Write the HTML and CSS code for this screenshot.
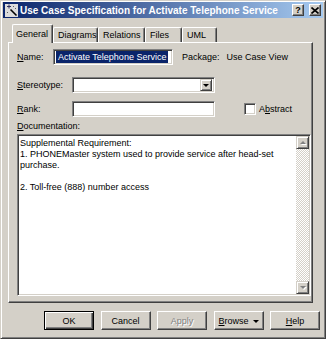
FILE: index.html
```html
<!DOCTYPE html>
<html>
<head>
<meta charset="utf-8">
<title>Use Case Specification</title>
<link rel="stylesheet" href="styles.css">
</head>
<body>

<div class="window">

<!-- barre de titre -->
<div class="titlebar">
	<svg class="app-icon" width="13" height="13" viewBox="0 0 13 13">
		<rect x="0" y="0" width="13" height="13" fill="#dcdcdc"/>
		<path d="M2 2.5h4M4 0.5v4" stroke="#303060" stroke-width="1"/>
		<path d="M5.5 5.5L11.5 11.5" stroke="#000" stroke-width="1.6"/>
		<path d="M8 2.5h1M10 4.5h1M2 8.5h1" stroke="#606060" stroke-width="1"/>
	</svg>
	<span class="title">Use Case Specification for Activate Telephone Service</span>
	<span class="cap-btn">?</span>
	<span class="cap-btn cap-close">
		<svg width="8" height="7" viewBox="0 0 8 7"><path d="M0.5 0.5L7.5 6.5M7.5 0.5L0.5 6.5" stroke="#000" stroke-width="1.6"/></svg>
	</span>
</div>

<!-- onglets -->
<div class="tabs">
	<div class="tab active tab-general">General</div>
	<div class="tab tab-diagrams">Diagrams</div>
	<div class="tab tab-relations">Relations</div>
	<div class="tab tab-files">Files</div>
	<div class="tab tab-uml">UML</div>
</div>

<div class="panel">

	<div class="row">
		<span class="lbl lbl-name"><u>N</u>ame:</span>
		<span class="field field-name"><span class="sel">Activate Telephone Service</span></span>
		<span class="package">Package:</span><span class="pkg-value">Use Case View</span>
	</div>

	<div class="row row-stereo">
		<span class="lbl lbl-wide"><u>S</u>tereotype:</span>
		<span class="field combo">
			<span class="combo-btn"><span class="arrow-down"></span></span>
		</span>
	</div>

	<div class="row row-rank">
		<span class="lbl lbl-wide"><u>R</u>ank:</span>
		<span class="field field-rank"></span>
		<span class="checkbox"></span>
		<span class="check-lbl">A<u>b</u>stract</span>
	</div>

	<div class="doc-label"><u>D</u>ocumentation:</div>

	<div class="doc">
		<div class="doc-text">
			Supplemental Requirement:<br>
			1. PHONEMaster system used to provide service after head-set<br>
			purchase.<br>
			<br>
			2. Toll-free (888) number access
		</div>
		<div class="scrollbar">
			<span class="sb-btn"><span class="arrow-up-dis"></span></span>
			<span class="sb-track"></span>
			<span class="sb-btn"><span class="arrow-down-dis"></span></span>
		</div>
	</div>

</div>

<!-- boutons -->
<div class="buttons">
	<span class="btn btn-default">OK</span>
	<span class="btn">Cancel</span>
	<span class="btn btn-disabled">Apply</span>
	<span class="btn"><span><u>B</u>rowse</span><span class="arrow-down browse-arrow"></span></span>
	<span class="btn"><span><u>H</u>elp</span></span>
</div>

</div>

</body>
</html>
```

FILE: styles.css
```css
* {box-sizing:border-box;}
body {margin:0; background:#d4d0c8; font-family:"Liberation Sans", Arial, sans-serif; font-size:9px; color:#000;}
u {text-decoration:underline; text-underline-offset:1px;}

.window {
	width:326px; height:339px; padding:1px 2px; background:#d4d0c8;
	border:1px solid; border-color:#d4d0c8 #404040 #404040 #d4d0c8;
	box-shadow:inset 1px 1px #fff, inset -1px -1px #808080;
}

/* barre de titre */
.titlebar {
	display:flex; align-items:center; height:16px; padding-left:2px;
	background:linear-gradient(to right, #0a246a, #a6caf0);
	color:#fff; font-weight:bold; font-size:10px;
}
.app-icon {flex:none; margin-right:2px;}
.title {flex:1; white-space:nowrap; overflow:hidden;}
.cap-btn {
	flex:none; display:flex; align-items:center; justify-content:center;
	width:12px; height:12px; margin-left:5px; background:#d4d0c8; color:#000;
	font-size:9px; font-weight:bold; line-height:1;
	border:1px solid; border-color:#fff #404040 #404040 #fff;
	box-shadow:inset -1px -1px #808080;
}
.cap-close {margin-right:2px;}

/* onglets */
.tabs {
	display:flex; align-items:flex-end; height:19px; margin:6px 0 -1px 9px;
	position:relative; z-index:1;
}
.tab {
	display:flex; align-items:center; height:15px; margin-bottom:1px; padding-left:4px;
	background:#d4d0c8; white-space:nowrap;
	border:1px solid; border-bottom:none; border-color:#fff #404040 #fff #fff;
	border-radius:2px 2px 0 0; box-shadow:inset -1px 0 #808080;
}
.tab.active {height:19px; margin-bottom:0; padding-left:3px; padding-bottom:1px;}
.tab-general {width:41px;}
.tab-diagrams {width:45px;}
.tab-relations {width:47px;}
.tab-files {width:37px;}
.tab-uml {width:35px;}

/* panneau */
.panel {
	width:305px; height:261px; margin-left:5px; padding:6px 0 0 8px;
	border:1px solid; border-color:#fff #404040 #404040 #fff;
	box-shadow:inset -1px -1px #808080;
}
.row {display:flex; align-items:center; height:16px;}
.row-stereo {margin-top:12px;}
.row-rank {margin-top:8px;}
.lbl {flex:none;}
.lbl-name {width:36px;}
.lbl-wide {width:55px;}

.field {
	flex:none; display:flex; align-items:center; height:16px; background:#fff;
	border:1px solid; border-color:#808080 #fff #fff #808080;
	box-shadow:inset 1px 1px #404040, inset -1px -1px #d4d0c8;
}
.field-name {width:120px; padding-left:2px;}
.sel {background:#0a246a; color:#fff; padding:1px 2px; line-height:10px; white-space:nowrap;}
.package {margin-left:9px;}
.pkg-value {margin-left:7px;}

.combo {width:143px; justify-content:flex-end; padding-right:2px;}
.combo-btn {
	display:flex; align-items:center; justify-content:center; width:12px; height:12px;
	background:#d4d0c8; border:1px solid; border-color:#d4d0c8 #404040 #404040 #d4d0c8;
	box-shadow:inset 1px 1px #fff, inset -1px -1px #808080;
}
.arrow-down {width:0; height:0; border-left:3px solid transparent; border-right:3px solid transparent; border-top:3px solid #000;}

.field-rank {width:143px;}
.checkbox {
	flex:none; width:12px; height:12px; margin-left:29px; background:#fff;
	border:1px solid; border-color:#808080 #fff #fff #808080;
	box-shadow:inset 1px 1px #404040, inset -1px -1px #d4d0c8;
}
.check-lbl {margin-left:3px;}

.doc-label {margin-top:3px; height:12px; line-height:12px;}
.doc {
	display:flex; width:294px; height:162px; margin-top:2px; background:#fff;
	border:1px solid; border-color:#808080 #fff #fff #808080;
	box-shadow:inset 1px 1px #404040, inset -1px -1px #d4d0c8;
	padding:1px;
}
.doc-text {flex:1; padding:2px 0 0 1px; line-height:11px; white-space:nowrap;}
.scrollbar {
	flex:none; display:flex; flex-direction:column; width:13px;
	background:repeating-conic-gradient(#d4d0c8 0 25%, #fff 0 50%) 0 0/2px 2px;
}
.sb-track {flex:1;}
.sb-btn {
	display:flex; align-items:center; justify-content:center; height:13px; background:#d4d0c8;
	border:1px solid; border-color:#d4d0c8 #404040 #404040 #d4d0c8;
	box-shadow:inset 1px 1px #fff, inset -1px -1px #808080;
}
.arrow-up-dis {width:0; height:0; border-left:3px solid transparent; border-right:3px solid transparent; border-bottom:3px solid #808080; filter:drop-shadow(1px 1px #fff);}
.arrow-down-dis {width:0; height:0; border-left:3px solid transparent; border-right:3px solid transparent; border-top:3px solid #808080; filter:drop-shadow(1px 1px #fff);}

/* boutons */
.buttons {display:flex; justify-content:flex-end; gap:6.5px; margin-top:8px; padding-right:3px;}
.btn {
	display:flex; align-items:center; justify-content:center; gap:4px; width:50px; height:19px;
	border:1px solid; border-color:#fff #404040 #404040 #fff;
	box-shadow:inset -1px -1px #808080;
}
.btn-default {border-color:#000; box-shadow:inset 1px 1px #fff, inset -1px -1px #404040, inset -2px -2px #808080;}
.btn-disabled {color:#808080; text-shadow:1px 1px #fff;}
.browse-arrow {margin-top:1px;}
```
